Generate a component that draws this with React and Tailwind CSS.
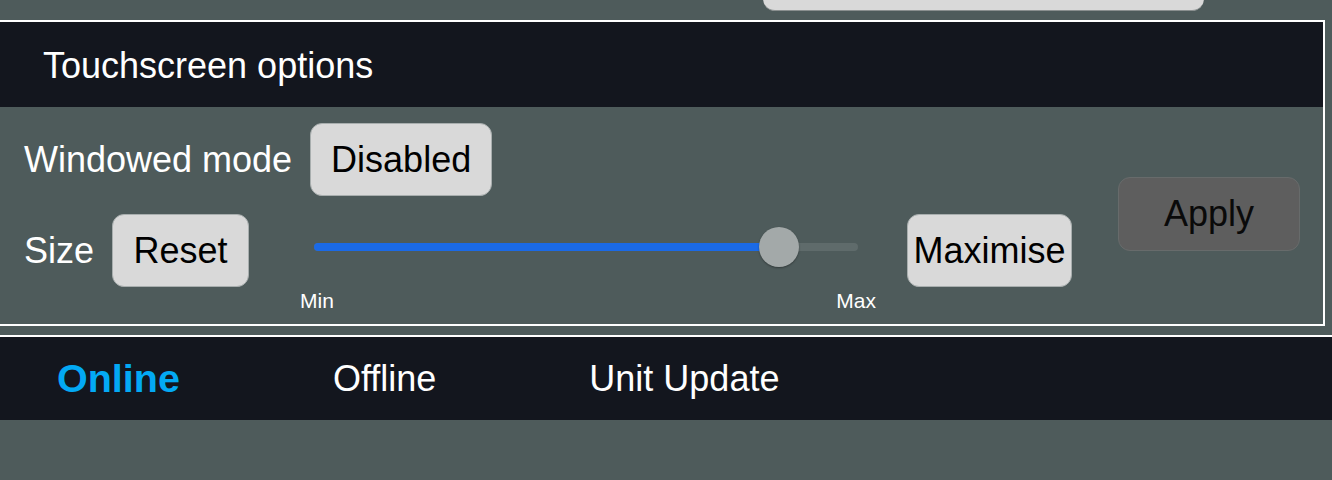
import { useState } from "react";

const BTN =
  "h-[73px] rounded-[12px] bg-[#d9d9d9] border border-[#a8aeae] text-black text-[36px] flex items-center justify-center";

function Slider({ value }) {
  return (
    <div className="relative w-[544px] h-10 ml-[65px] mb-2">
      {/* track */}
      <div className="absolute left-0 right-0 top-[16px] h-2 rounded-full bg-[#5f6b6b]" />
      <div
        className="absolute left-0 top-[16px] h-2 rounded-full bg-[#1b6ae6]"
        style={{ width: `${value}%` }}
      />
      <div
        className="absolute top-0 w-10 h-10 -ml-5 rounded-full bg-[#a3a9a9] shadow-[0_1px_2px_rgba(0,0,0,0.35)]"
        style={{ left: `${value}%` }}
      />
      <div className="absolute left-[-14px] right-[-18px] top-[62px] flex justify-between text-[21px] leading-6 text-white">
        <span>Min</span>
        <span>Max</span>
      </div>
    </div>
  );
}

export default function App() {
  const [tab] = useState("Online");
  const tabs = ["Online", "Offline", "Unit Update"];

  return (
    <div className="min-h-[480px] overflow-hidden bg-[#4e5b5b] font-['Liberation_Sans',Arial,sans-serif]">
      {/* previous control, scrolled mostly out of view */}
      <div className="ml-[763px] mt-[-49px] w-[441px] h-[60px] rounded-[12px] bg-[#d9d9d9] border-b border-[#8a8f8f]" />

      {/* Touchscreen options */}
      <div className="mt-[9px] ml-[-2px] mr-[7px] border-2 border-white">
        <div className="h-[85px] bg-[#13161e] flex items-center pt-[3px] pl-[43px] text-white text-[36px]">
          Touchscreen options
        </div>
        <div className="h-[217px] flex items-center justify-between pl-6 pr-[23px]">
          <div className="self-start pt-[16px] flex flex-col gap-[18px]">
            <div className="flex items-center gap-[18px]">
              <span className="text-white text-[36px]">Windowed mode</span>
              <button className={`${BTN} w-[182px]`}>Disabled</button>
            </div>
            <div className="flex items-center">
              <span className="text-white text-[36px]">Size</span>
              <button className={`${BTN} w-[137px] ml-[18px]`}>Reset</button>
              <Slider value={85.5} />
              <button className={`${BTN} w-[165px] ml-[49px]`}>Maximise</button>
            </div>
          </div>
          <button className="mb-1 w-[182px] h-[74px] rounded-[12px] bg-[#5e5e5e] border border-[#676b6b] text-[#0a0a0a] text-[36px] flex items-center justify-center">
            Apply
          </button>
        </div>
      </div>

      {/* bottom navigation */}
      <div className="mt-[9px] border-t-2 border-white h-[85px] bg-[#13161e] flex items-center pl-[57px] gap-[153px]">
        {tabs.map((t) =>
          t === tab ? (
            <span key={t} className="text-[#03a9f4] font-bold text-[39.5px]">
              {t}
            </span>
          ) : (
            <span key={t} className="text-white text-[36px]">
              {t}
            </span>
          )
        )}
      </div>
    </div>
  );
}
